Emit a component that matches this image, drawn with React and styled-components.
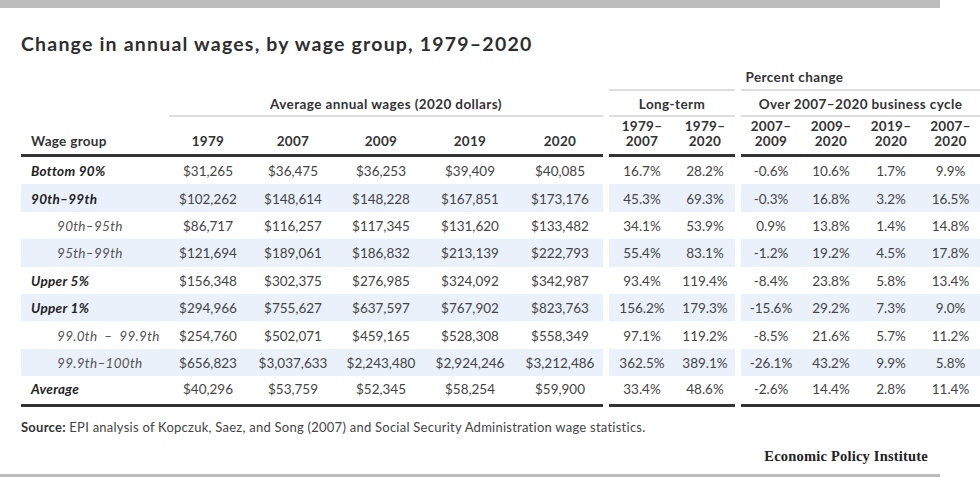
import styled, { createGlobalStyle } from "styled-components";

const GlobalStyle = createGlobalStyle`
  html, body {
    margin: 0;
    padding: 0;
    background: #fff;
    overflow: hidden;
  }
  body {
    font-family: Lato, "Liberation Sans", sans-serif;
    color: #333;
  }
`;

const COLS = "148px 78px 92px 84px 94px 86px 6px 66px 60px 6px 60px 60px 60px 59px";

const Page = styled.div`
  width: 980px;
  height: 477px;
  overflow: hidden;
`;

const Bar = styled.div`
  width: 940px;
  height: ${(p) => p.h}px;
  background: #bdbdbd;
  margin-top: ${(p) => p.mt || 0}px;
`;

const Body = styled.div`
  padding-left: 21px;
`;

const Title = styled.h1`
  margin: 24px 0 0;
  font-size: 19.5px;
  line-height: 24px;
  font-weight: 700;
  letter-spacing: 1.2px;
  color: #2e2e2e;
`;

const Row = styled.div`
  display: grid;
  grid-template-columns: ${COLS};
  width: 959px;
  margin-top: ${(p) => p.mt || 0}px;
`;

const GroupCell = styled.div`
  grid-column: ${(p) => p.span};
  height: ${(p) => p.h}px;
  box-sizing: border-box;
  display: flex;
  align-items: flex-end;
  justify-content: center;
  padding-bottom: ${(p) => p.pb || 3}px;
  font-size: 13.5px;
  line-height: 16px;
  font-weight: 700;
  letter-spacing: 0.4px;
  color: #333;
  border-bottom: ${(p) => (p.line ? "2px solid #dedede" : "none")};
`;

const HeadCell = styled.div`
  box-sizing: border-box;
  height: 40px;
  padding: 0 0 5px;
  display: flex;
  flex-direction: column;
  justify-content: flex-end;
  align-items: ${(p) => (p.left ? "flex-start" : "center")};
  padding-left: ${(p) => (p.left ? "10px" : "0")};
  font-size: 13.5px;
  line-height: 15px;
  font-weight: 700;
  letter-spacing: 0.3px;
  color: #333;
  border-bottom: 3px solid #333;
`;

const HeadLine = styled.span`
  display: block;
`;

const Gap = styled.div``;

const Cell = styled.div`
  box-sizing: border-box;
  height: ${(p) => (p.last ? 30.4 : 27.4)}px;
  display: flex;
  align-items: center;
  justify-content: center;
  padding-top: 1px;
  font-size: 13.5px;
  color: #444;
  background: ${(p) => (p.shade ? "#eaf1fa" : "transparent")};
  border-bottom: ${(p) => (p.last ? "3px solid #333" : "none")};
  padding-bottom: ${(p) => (p.last ? 3 : 0)}px;
`;

const Label = styled(Cell)`
  justify-content: flex-start;
  padding-left: ${(p) => (p.sub ? 36 : 10)}px;
  font-style: italic;
  letter-spacing: 0.3px;
  font-weight: ${(p) => (p.sub ? 400 : 700)};
  color: ${(p) => (p.sub ? "#555" : "#222")};
  white-space: pre;
`;

const Source = styled.p`
  margin: 12px 0 0;
  font-size: 13px;
  line-height: 16px;
  letter-spacing: 0.25px;
  color: #444;
  b {
    color: #333;
  }
`;

const Logo = styled.div`
  width: 907px;
  margin-top: 12px;
  text-align: right;
  font-family: "Liberation Serif", "DejaVu Serif", serif;
  font-weight: 700;
  font-size: 14.5px;
  letter-spacing: 0.2px;
  line-height: 18px;
  color: #222;
`;

const rows = [
  ["Bottom 90%", false, ["$31,265", "$36,475", "$36,253", "$39,409", "$40,085"], ["16.7%", "28.2%"], ["-0.6%", "10.6%", "1.7%", "9.9%"]],
  ["90th–99th", false, ["$102,262", "$148,614", "$148,228", "$167,851", "$173,176"], ["45.3%", "69.3%"], ["-0.3%", "16.8%", "3.2%", "16.5%"]],
  ["90th–95th", true, ["$86,717", "$116,257", "$117,345", "$131,620", "$133,482"], ["34.1%", "53.9%"], ["0.9%", "13.8%", "1.4%", "14.8%"]],
  ["95th–99th", true, ["$121,694", "$189,061", "$186,832", "$213,139", "$222,793"], ["55.4%", "83.1%"], ["-1.2%", "19.2%", "4.5%", "17.8%"]],
  ["Upper 5%", false, ["$156,348", "$302,375", "$276,985", "$324,092", "$342,987"], ["93.4%", "119.4%"], ["-8.4%", "23.8%", "5.8%", "13.4%"]],
  ["Upper 1%", false, ["$294,966", "$755,627", "$637,597", "$767,902", "$823,763"], ["156.2%", "179.3%"], ["-15.6%", "29.2%", "7.3%", "9.0%"]],
  ["99.0th  –  99.9th", true, ["$254,760", "$502,071", "$459,165", "$528,308", "$558,349"], ["97.1%", "119.2%"], ["-8.5%", "21.6%", "5.7%", "11.2%"]],
  ["99.9th–100th", true, ["$656,823", "$3,037,633", "$2,243,480", "$2,924,246", "$3,212,486"], ["362.5%", "389.1%"], ["-26.1%", "43.2%", "9.9%", "5.8%"]],
  ["Average", false, ["$40,296", "$53,759", "$52,345", "$58,254", "$59,900"], ["33.4%", "48.6%"], ["-2.6%", "14.4%", "2.8%", "11.4%"]],
];

const years = ["1979", "2007", "2009", "2019", "2020"];
const longTerm = [["1979–", "2007"], ["1979–", "2020"]];
const cycle = [["2007–", "2009"], ["2009–", "2020"], ["2019–", "2020"], ["2007–", "2020"]];

export default function App() {
  return (
    <Page>
      <GlobalStyle />
      <Bar h={8} />
      <Body>
        <Title>Change in annual wages, by wage group, 1979–2020</Title>

        <Row>
          <GroupCell span="8 / 10" h={35} line />
          <GroupCell span="10 / 11" h={35} />
          <GroupCell span="11 / 15" h={35} line />
        </Row>
        <Row mt={-35}>
          <GroupCell span="8 / 15" h={35} pb={6}>Percent change</GroupCell>
        </Row>
        <Row>
          <GroupCell span="2 / 7" h={26} line>Average annual wages (2020 dollars)</GroupCell>
          <GroupCell span="8 / 10" h={26} line>Long-term</GroupCell>
          <GroupCell span="11 / 15" h={26} line>Over 2007–2020 business cycle</GroupCell>
        </Row>
        <Row>
          <HeadCell left>Wage group</HeadCell>
          {years.map((y) => (
            <HeadCell key={y}>{y}</HeadCell>
          ))}
          <Gap />
          {longTerm.map(([a, b], i) => (
            <HeadCell key={i}>
              <HeadLine>{a}</HeadLine>
              <HeadLine>{b}</HeadLine>
            </HeadCell>
          ))}
          <Gap />
          {cycle.map(([a, b], i) => (
            <HeadCell key={i}>
              <HeadLine>{a}</HeadLine>
              <HeadLine>{b}</HeadLine>
            </HeadCell>
          ))}
        </Row>

        {rows.map(([name, sub, wages, lt, bc], i) => {
          const shade = i % 2 === 1;
          const last = i === rows.length - 1;
          return (
            <Row key={name}>
              <Label sub={sub} shade={shade} last={last}>{name}</Label>
              {wages.map((v, j) => (
                <Cell key={"w" + j} shade={shade} last={last}>{v}</Cell>
              ))}
              <Gap />
              {lt.map((v, j) => (
                <Cell key={"l" + j} shade={shade} last={last}>{v}</Cell>
              ))}
              <Gap />
              {bc.map((v, j) => (
                <Cell key={"b" + j} shade={shade} last={last}>{v}</Cell>
              ))}
            </Row>
          );
        })}

        <Source>
          <b>Source:</b> EPI analysis of Kopczuk, Saez, and Song (2007) and Social Security Administration wage statistics.
        </Source>
        <Logo>Economic Policy Institute</Logo>
      </Body>
      <Bar h={4} mt={9} />
    </Page>
  );
}
